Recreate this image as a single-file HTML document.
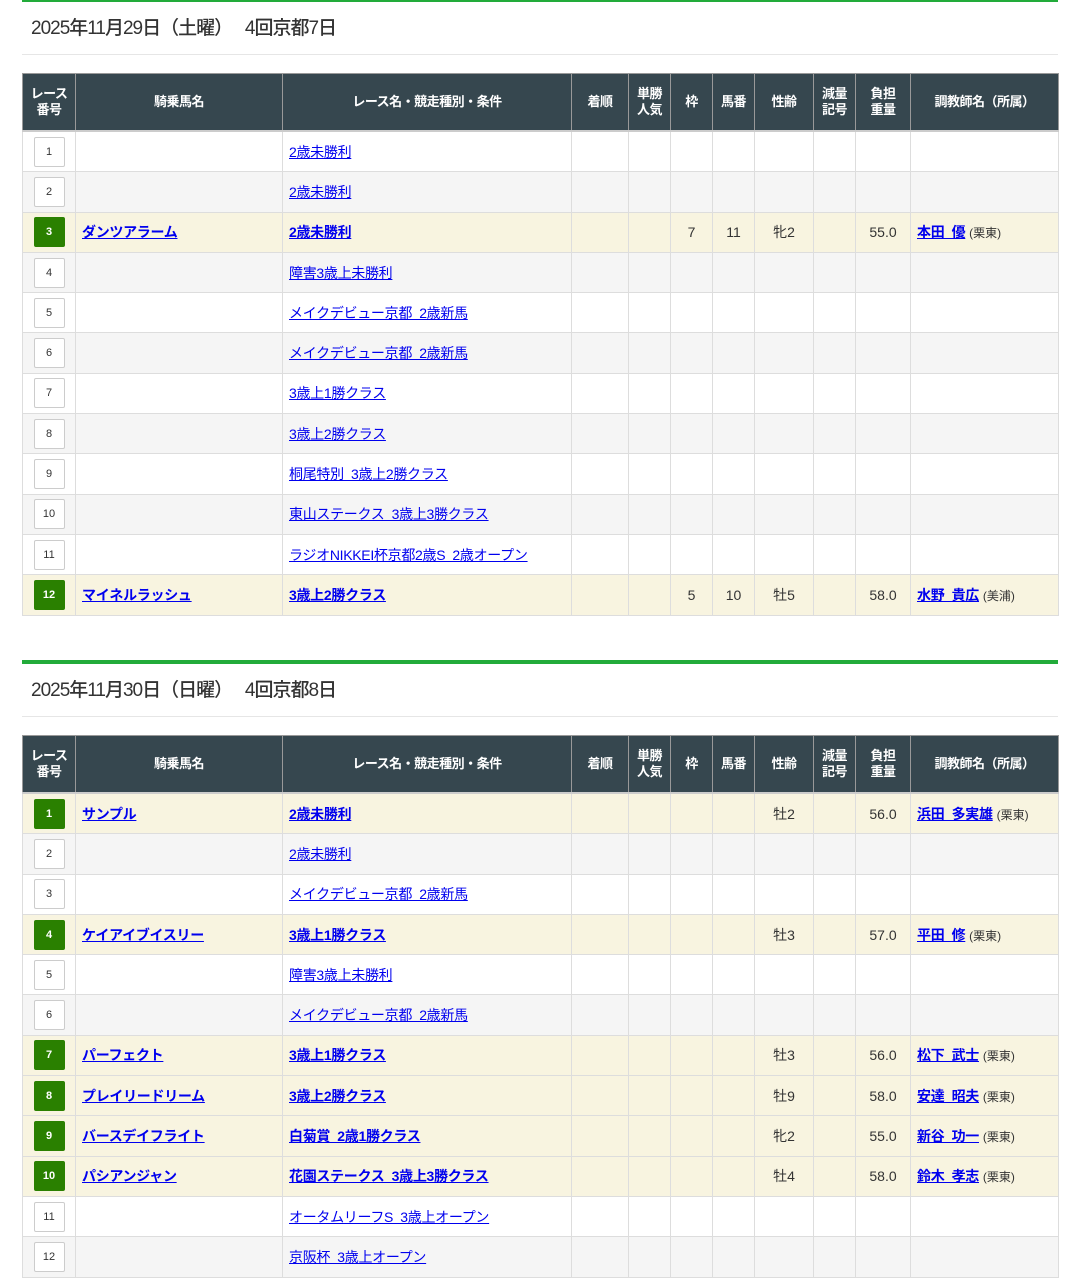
<!DOCTYPE html>
<html><head><meta charset="utf-8"><style>
body{margin:0;background:#fff;font-family:"Liberation Sans","Noto Sans CJK JP",sans-serif;color:#333;}
.sec{position:absolute;left:22px;width:1036px;}
.gl{height:4px;background:#22ab3a;}
h2{margin:0;font-weight:500;font-size:19px;color:#333;height:52px;line-height:54px;padding-left:9px;border-bottom:1px solid #e6e6e6;letter-spacing:-1px;}
table{border-collapse:collapse;table-layout:fixed;width:1037px;margin-top:18px;font-size:14px;}
th{background:#36474f;color:#fff;font-weight:bold;font-size:13px;line-height:16px;border:1px solid #999;height:56px;padding:0;letter-spacing:-0.5px;}
td{border:1px solid #ddd;height:39.3px;padding:0;text-align:center;}
tbody tr{background:#fff}
tbody tr:nth-child(even){background:#f5f5f5}
tbody tr.h{background:#f8f4e0}
thead tr{border-bottom:2px solid #ccc}
td.l{text-align:left;padding-left:6px;white-space:pre}
a{color:#0000ee;text-decoration:underline;letter-spacing:-0.3px}
tr.h a{font-weight:bold}
.n{display:inline-block;width:29px;height:28px;line-height:28px;border:1px solid #ccc;border-radius:2px;background:#fff;font-size:11px;color:#333;}
.g{background:#2a8000;border-color:#2a8000;color:#fff;font-weight:bold}
.s{font-size:12px}
</style></head><body>
<div class="sec" style="top:-2px"><div class="gl"></div><h2>2025年11月29日（土曜）　 4回京都7日</h2>
<table><colgroup><col style="width:53px"><col style="width:207px"><col style="width:289px"><col style="width:57px"><col style="width:42px"><col style="width:42px"><col style="width:42px"><col style="width:59px"><col style="width:42px"><col style="width:55px"><col style="width:148px"></colgroup>
<thead><tr><th>レース<br>番号</th><th>騎乗馬名</th><th>レース名・競走種別・条件</th><th>着順</th><th>単勝<br>人気</th><th>枠</th><th>馬番</th><th>性齢</th><th>減量<br>記号</th><th>負担<br>重量</th><th>調教師名（所属）</th></tr></thead>
<tbody>
<tr><td><span class="n">1</span></td><td></td><td class="l"><a>2歳未勝利</a></td><td></td><td></td><td></td><td></td><td></td><td></td><td></td><td></td></tr>
<tr><td><span class="n">2</span></td><td></td><td class="l"><a>2歳未勝利</a></td><td></td><td></td><td></td><td></td><td></td><td></td><td></td><td></td></tr>
<tr class="h"><td><span class="n g">3</span></td><td class="l"><a>ダンツアラーム</a></td><td class="l"><a>2歳未勝利</a></td><td></td><td></td><td>7</td><td>11</td><td>牝2</td><td></td><td>55.0</td><td class="l"><a>本田  優</a> <span class="s">(栗東)</span></td></tr>
<tr><td><span class="n">4</span></td><td></td><td class="l"><a>障害3歳上未勝利</a></td><td></td><td></td><td></td><td></td><td></td><td></td><td></td><td></td></tr>
<tr><td><span class="n">5</span></td><td></td><td class="l"><a>メイクデビュー京都  2歳新馬</a></td><td></td><td></td><td></td><td></td><td></td><td></td><td></td><td></td></tr>
<tr><td><span class="n">6</span></td><td></td><td class="l"><a>メイクデビュー京都  2歳新馬</a></td><td></td><td></td><td></td><td></td><td></td><td></td><td></td><td></td></tr>
<tr><td><span class="n">7</span></td><td></td><td class="l"><a>3歳上1勝クラス</a></td><td></td><td></td><td></td><td></td><td></td><td></td><td></td><td></td></tr>
<tr><td><span class="n">8</span></td><td></td><td class="l"><a>3歳上2勝クラス</a></td><td></td><td></td><td></td><td></td><td></td><td></td><td></td><td></td></tr>
<tr><td><span class="n">9</span></td><td></td><td class="l"><a>桐尾特別  3歳上2勝クラス</a></td><td></td><td></td><td></td><td></td><td></td><td></td><td></td><td></td></tr>
<tr><td><span class="n">10</span></td><td></td><td class="l"><a>東山ステークス  3歳上3勝クラス</a></td><td></td><td></td><td></td><td></td><td></td><td></td><td></td><td></td></tr>
<tr><td><span class="n">11</span></td><td></td><td class="l"><a>ラジオNIKKEI杯京都2歳S  2歳オープン</a></td><td></td><td></td><td></td><td></td><td></td><td></td><td></td><td></td></tr>
<tr class="h"><td><span class="n g">12</span></td><td class="l"><a>マイネルラッシュ</a></td><td class="l"><a>3歳上2勝クラス</a></td><td></td><td></td><td>5</td><td>10</td><td>牡5</td><td></td><td>58.0</td><td class="l"><a>水野  貴広</a> <span class="s">(美浦)</span></td></tr>
</tbody></table></div>

<div class="sec" style="top:660px"><div class="gl"></div><h2>2025年11月30日（日曜）　 4回京都8日</h2>
<table><colgroup><col style="width:53px"><col style="width:207px"><col style="width:289px"><col style="width:57px"><col style="width:42px"><col style="width:42px"><col style="width:42px"><col style="width:59px"><col style="width:42px"><col style="width:55px"><col style="width:148px"></colgroup>
<thead><tr><th>レース<br>番号</th><th>騎乗馬名</th><th>レース名・競走種別・条件</th><th>着順</th><th>単勝<br>人気</th><th>枠</th><th>馬番</th><th>性齢</th><th>減量<br>記号</th><th>負担<br>重量</th><th>調教師名（所属）</th></tr></thead>
<tbody>
<tr class="h"><td><span class="n g">1</span></td><td class="l"><a>サンプル</a></td><td class="l"><a>2歳未勝利</a></td><td></td><td></td><td></td><td></td><td>牡2</td><td></td><td>56.0</td><td class="l"><a>浜田  多実雄</a> <span class="s">(栗東)</span></td></tr>
<tr><td><span class="n">2</span></td><td></td><td class="l"><a>2歳未勝利</a></td><td></td><td></td><td></td><td></td><td></td><td></td><td></td><td></td></tr>
<tr style="background:#fff"><td><span class="n">3</span></td><td></td><td class="l"><a>メイクデビュー京都  2歳新馬</a></td><td></td><td></td><td></td><td></td><td></td><td></td><td></td><td></td></tr>
<tr class="h"><td><span class="n g">4</span></td><td class="l"><a>ケイアイブイスリー</a></td><td class="l"><a>3歳上1勝クラス</a></td><td></td><td></td><td></td><td></td><td>牡3</td><td></td><td>57.0</td><td class="l"><a>平田  修</a> <span class="s">(栗東)</span></td></tr>
<tr style="background:#fff"><td><span class="n">5</span></td><td></td><td class="l"><a>障害3歳上未勝利</a></td><td></td><td></td><td></td><td></td><td></td><td></td><td></td><td></td></tr>
<tr style="background:#f5f5f5"><td><span class="n">6</span></td><td></td><td class="l"><a>メイクデビュー京都  2歳新馬</a></td><td></td><td></td><td></td><td></td><td></td><td></td><td></td><td></td></tr>
<tr class="h"><td><span class="n g">7</span></td><td class="l"><a>パーフェクト</a></td><td class="l"><a>3歳上1勝クラス</a></td><td></td><td></td><td></td><td></td><td>牡3</td><td></td><td>56.0</td><td class="l"><a>松下  武士</a> <span class="s">(栗東)</span></td></tr>
<tr class="h"><td><span class="n g">8</span></td><td class="l"><a>プレイリードリーム</a></td><td class="l"><a>3歳上2勝クラス</a></td><td></td><td></td><td></td><td></td><td>牡9</td><td></td><td>58.0</td><td class="l"><a>安達  昭夫</a> <span class="s">(栗東)</span></td></tr>
<tr class="h"><td><span class="n g">9</span></td><td class="l"><a>バースデイフライト</a></td><td class="l"><a>白菊賞  2歳1勝クラス</a></td><td></td><td></td><td></td><td></td><td>牝2</td><td></td><td>55.0</td><td class="l"><a>新谷  功一</a> <span class="s">(栗東)</span></td></tr>
<tr class="h"><td><span class="n g">10</span></td><td class="l"><a>パシアンジャン</a></td><td class="l"><a>花園ステークス  3歳上3勝クラス</a></td><td></td><td></td><td></td><td></td><td>牡4</td><td></td><td>58.0</td><td class="l"><a>鈴木  孝志</a> <span class="s">(栗東)</span></td></tr>
<tr style="background:#fff"><td><span class="n">11</span></td><td></td><td class="l"><a>オータムリーフS  3歳上オープン</a></td><td></td><td></td><td></td><td></td><td></td><td></td><td></td><td></td></tr>
<tr style="background:#f5f5f5"><td><span class="n">12</span></td><td></td><td class="l"><a>京阪杯  3歳上オープン</a></td><td></td><td></td><td></td><td></td><td></td><td></td><td></td><td></td></tr>
</tbody></table></div>
</body></html>
